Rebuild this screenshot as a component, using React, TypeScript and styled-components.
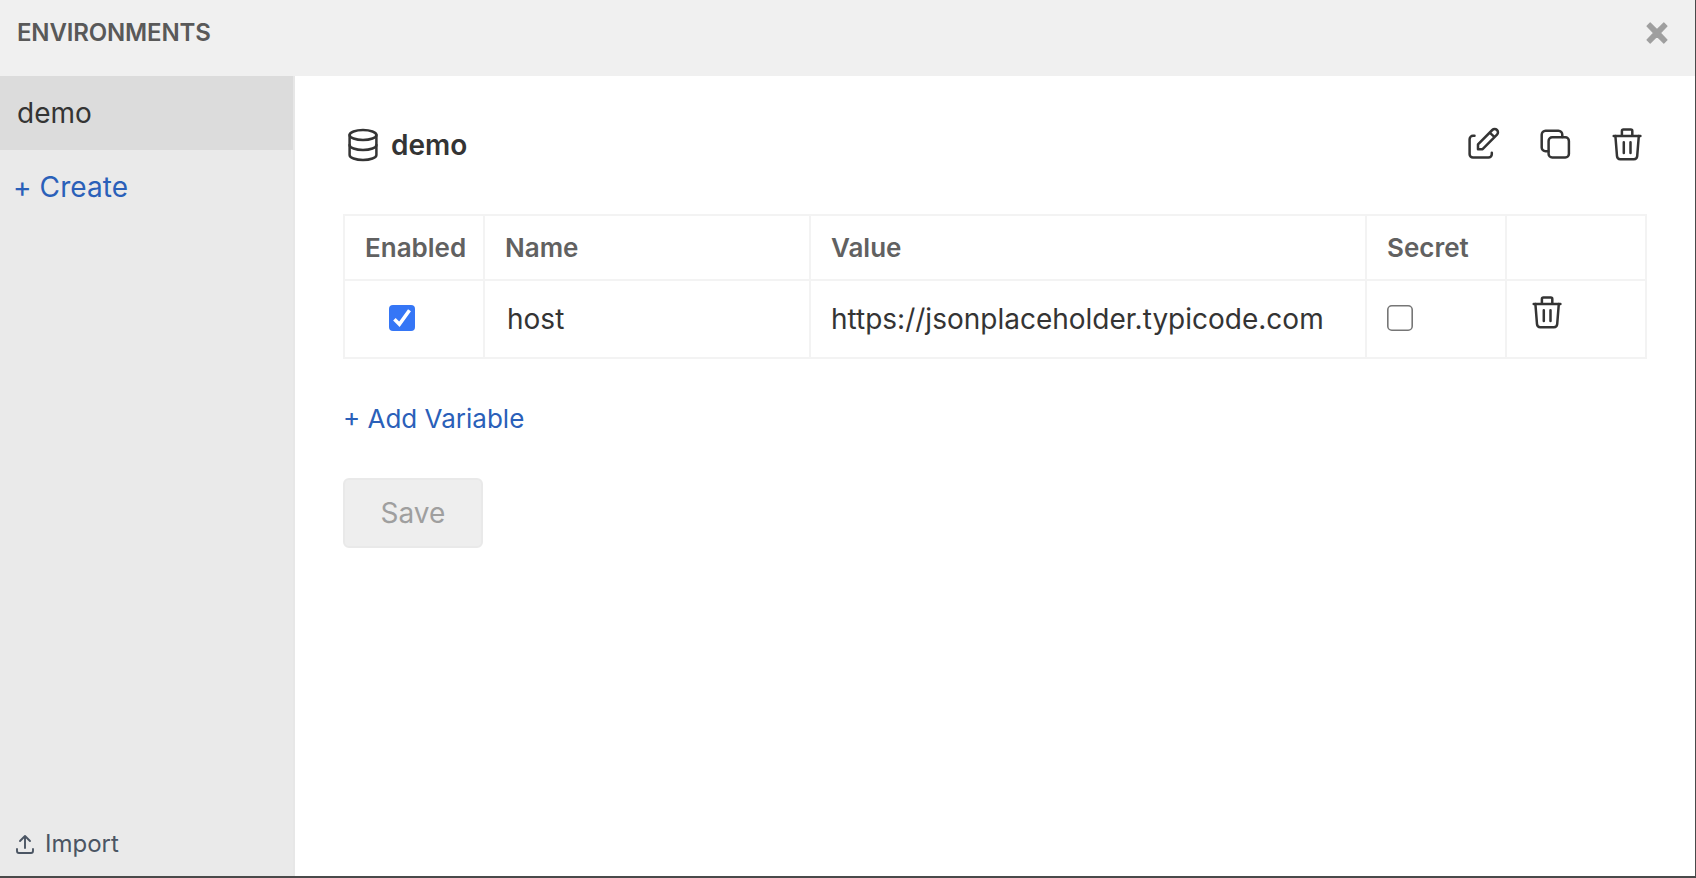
import React, { useState } from 'react';
import styled, { createGlobalStyle } from 'styled-components';

const GlobalStyle = createGlobalStyle`
  *, *::before, *::after { box-sizing: border-box; }
  body {
    margin: 0;
    font-family: Inter, "Liberation Sans", sans-serif;
    color: #343434;
    background: #fff;
  }
  button { font: inherit; background: none; border: 0; padding: 0; cursor: pointer; }
`;

const Modal = styled.div`
  display: flex;
  flex-direction: column;
  height: 878px;
  border-right: 1px solid #4a4a4a;
  border-bottom: 2px solid #4a4a4a;
  overflow: hidden;
`;

const Header = styled.header`
  display: flex;
  align-items: center;
  justify-content: space-between;
  flex: none;
  height: 76px;
  padding: 0 27px 11px 17px;
  background: #f0f0f0;
`;

const Heading = styled.h1`
  margin: 0;
  font-size: 24px;
  line-height: 30px;
  font-weight: 600;
  color: #595959;
  letter-spacing: -0.16px;
`;

const CloseButton = styled.button`
  display: flex;
  color: #9f9f9f;
`;

const Body = styled.div`
  display: flex;
  flex: 1;
  min-height: 0;
`;

const Sidebar = styled.aside`
  display: flex;
  flex-direction: column;
  flex: none;
  width: 295px;
  border-right: 2px solid #e7e7e7;
  background: #eaeaea;
`;

const EnvironmentItem = styled.div<{ $active?: boolean }>`
  height: 74px;
  padding-left: 17px;
  font-size: 28px;
  line-height: 74px;
  background: ${(p) => (p.$active ? '#dcdcdc' : 'transparent')};
`;

const TextLink = styled.button<{ $size: number }>`
  align-self: flex-start;
  font-size: ${(p) => p.$size}px;
  line-height: 40px;
  color: #2a60b9;
  white-space: nowrap;
`;

const CreateLink = styled(TextLink)`
  margin: 17px 0 0 13px;
  font-feature-settings: "calt" 0;
  letter-spacing: 0.1px;
`;

const ImportButton = styled.button`
  display: flex;
  align-items: center;
  gap: 8px;
  margin: auto 0 16px 13px;
  font-size: 24px;
  line-height: 32px;
  color: #4b5563;
`;

const Content = styled.main`
  display: flex;
  flex-direction: column;
  flex: 1;
  padding: 48px 48px 0;
`;

const TitleRow = styled.div`
  display: flex;
  align-items: center;
  justify-content: space-between;
  height: 42px;
`;

const Title = styled.div`
  display: flex;
  align-items: center;
  gap: 8px;
  font-size: 28px;
  font-weight: 600;
`;

const Actions = styled.div`
  display: flex;
  gap: 32px;
`;

const IconButton = styled.button`
  display: flex;
  color: #343434;
`;

const Table = styled.table`
  width: 1304px;
  margin-top: 48px;
  border-collapse: collapse;
  table-layout: fixed;
`;

const Column = styled.col<{ $width: number }>`
  width: ${(p) => p.$width}px;
`;

const HeadCell = styled.th`
  height: 65px;
  padding: 0 0 0 20px;
  border: 2px solid #f3f3f3;
  font-size: 26px;
  font-weight: 600;
  text-align: left;
  color: #616161;
`;

const Cell = styled.td<{ $indent?: number }>`
  height: 78px;
  padding: 0 0 0 ${(p) => p.$indent ?? 20}px;
  border: 2px solid #f3f3f3;
  font-size: 28px;
  white-space: nowrap;
`;

const RowDelete = styled(IconButton)`
  margin-bottom: 12px;
`;

const Box = styled.button`
  display: block;
  width: 26px;
  height: 26px;
  margin-bottom: 2px;
`;

const AddLink = styled(TextLink)`
  margin-top: 40px;
`;

const SaveButton = styled.button`
  width: 140px;
  height: 70px;
  margin-top: 39px;
  border: 2px solid #e9e9e9;
  border-radius: 6px;
  background: #eee;
  font-size: 28px;
  color: #9f9f9f;
`;

const Icon = ({ children }: { children: React.ReactNode }) => (
  <svg width="40" height="40" viewBox="0 0 40 40" fill="none" stroke="currentColor" strokeWidth="2.5" strokeLinecap="round" strokeLinejoin="round">
    {children}
  </svg>
);

const DatabaseIcon = () => (
  <Icon>
    <ellipse cx="20" cy="10" rx="13.4" ry="5" />
    <path d="M6.6 10v10c0 2.76 6 5 13.4 5s13.4-2.24 13.4-5V10" />
    <path d="M6.6 20v10c0 2.76 6 5 13.4 5s13.4-2.24 13.4-5V20" />
  </Icon>
);

const EditIcon = () => (
  <Icon>
    <path d="M11.5 10.8H10a3.4 3.4 0 0 0-3.4 3.4v15A3.4 3.4 0 0 0 10 32.6h15.4a3.4 3.4 0 0 0 3.4-3.4V27.7" />
    <path d="M15 24.2v-4.8L29.3 5a3.3 3.3 0 0 1 4.7 4.7L19.6 24.2zM27 7.9l4.6 4.3" />
  </Icon>
);

const CopyIcon = () => (
  <Icon>
    <rect x="13.6" y="12.3" width="20.3" height="20.2" rx="3.6" />
    <path d="M13.2 26.3H10.6A3.8 3.8 0 0 1 6.7 22.5V9.7a3.9 3.9 0 0 1 3.9-3.9h12.8a3.9 3.9 0 0 1 3.9 3.9v2.3" />
  </Icon>
);

const TrashIcon = () => (
  <Icon>
    <path d="M6.7 10.9h26.7M14.9 10.9V6.1a1.5 1.5 0 0 1 1.5-1.5h7.4a1.500 1.500 0 0 1 1.5 1.5v4.8" />
    <path d="M8.4 11l1.6 20.2a3.3 3.3 0 0 0 3.3 3h13.6a3.3 3.3 0 0 0 3.3-3L31.8 11M16.8 17.2v10.700M23.5 17.2v10.700" />
  </Icon>
);

const CloseIcon = () => (
  <svg width="22" height="22" viewBox="0 0 22 22" fill="currentColor" stroke="currentColor" strokeWidth="1.2" strokeLinejoin="round">
    <path d="M4.2 1L11 7.7 17.8 1 21 4.2 14.3 11 21 17.8 17.8 21 11 14.3 4.2 21 1 17.8 7.7 11 1 4.2z" />
  </svg>
);

const UploadIcon = () => (
  <svg width="24" height="24" viewBox="0 0 24 24" fill="none" stroke="currentColor" strokeWidth="1.9" strokeLinecap="round" strokeLinejoin="round">
    <path d="M4 17v2a2 2 0 0 0 2 2h12a2 2 0 0 0 2-2v-2" />
    <path d="M7 9l5-5 5 5M12 4v12" />
  </svg>
);

const Checkbox = ({ checked, label, onToggle }: { checked: boolean; label: string; onToggle: () => void }) => (
  <Box role="checkbox" aria-checked={checked} aria-label={label} onClick={onToggle}>
    <svg width="26" height="26" viewBox="0 0 26 26" fill="none" display="block">
      {checked ? (
        <>
          <rect width="26" height="26" rx="4" fill="#3576f6" />
          <path d="M5.4 14.3l5 4.9L20.5 5.3" stroke="#fff" strokeWidth="3.6" />
        </>
      ) : (
        <rect x=".8" y=".8" width="24.4" height="24.4" rx="4" stroke="#767676" strokeWidth="1.6" fill="#fff" />
      )}
    </svg>
  </Box>
);

export default function App() {
  const [enabled, setEnabled] = useState(true);
  const [secret, setSecret] = useState(false);

  return (
    <>
      <GlobalStyle />
      <Modal>
        <Header>
          <Heading>ENVIRONMENTS</Heading>
          <CloseButton aria-label="Close"><CloseIcon /></CloseButton>
        </Header>
        <Body>
          <Sidebar>
            <EnvironmentItem $active>demo</EnvironmentItem>
            <CreateLink $size={28}>+ Create</CreateLink>
            <ImportButton><UploadIcon />Import</ImportButton>
          </Sidebar>
          <Content>
            <TitleRow>
              <Title><DatabaseIcon />demo</Title>
              <Actions>
                <IconButton aria-label="Rename"><EditIcon /></IconButton>
                <IconButton aria-label="Copy"><CopyIcon /></IconButton>
                <IconButton aria-label="Delete"><TrashIcon /></IconButton>
              </Actions>
            </TitleRow>
            <Table>
              <colgroup>
                <Column $width={140} />
                <Column $width={326} />
                <Column $width={556} />
                <Column $width={140} />
                <Column $width={140} />
              </colgroup>
              <thead>
                <tr>
                  <HeadCell>Enabled</HeadCell>
                  <HeadCell>Name</HeadCell>
                  <HeadCell>Value</HeadCell>
                  <HeadCell>Secret</HeadCell>
                  <HeadCell />
                </tr>
              </thead>
              <tbody>
                <tr>
                  <Cell $indent={44}>
                    <Checkbox label="Enabled" checked={enabled} onToggle={() => setEnabled(!enabled)} />
                  </Cell>
                  <Cell $indent={22}>host</Cell>
                  <Cell>https://jsonplaceholder.typicode.com</Cell>
                  <Cell>
                    <Checkbox label="Secret" checked={secret} onToggle={() => setSecret(!secret)} />
                  </Cell>
                  <Cell>
                    <RowDelete aria-label="Delete variable"><TrashIcon /></RowDelete>
                  </Cell>
                </tr>
              </tbody>
            </Table>
            <AddLink $size={26}>+ Add Variable</AddLink>
            <SaveButton disabled>Save</SaveButton>
          </Content>
        </Body>
      </Modal>
    </>
  );
}
